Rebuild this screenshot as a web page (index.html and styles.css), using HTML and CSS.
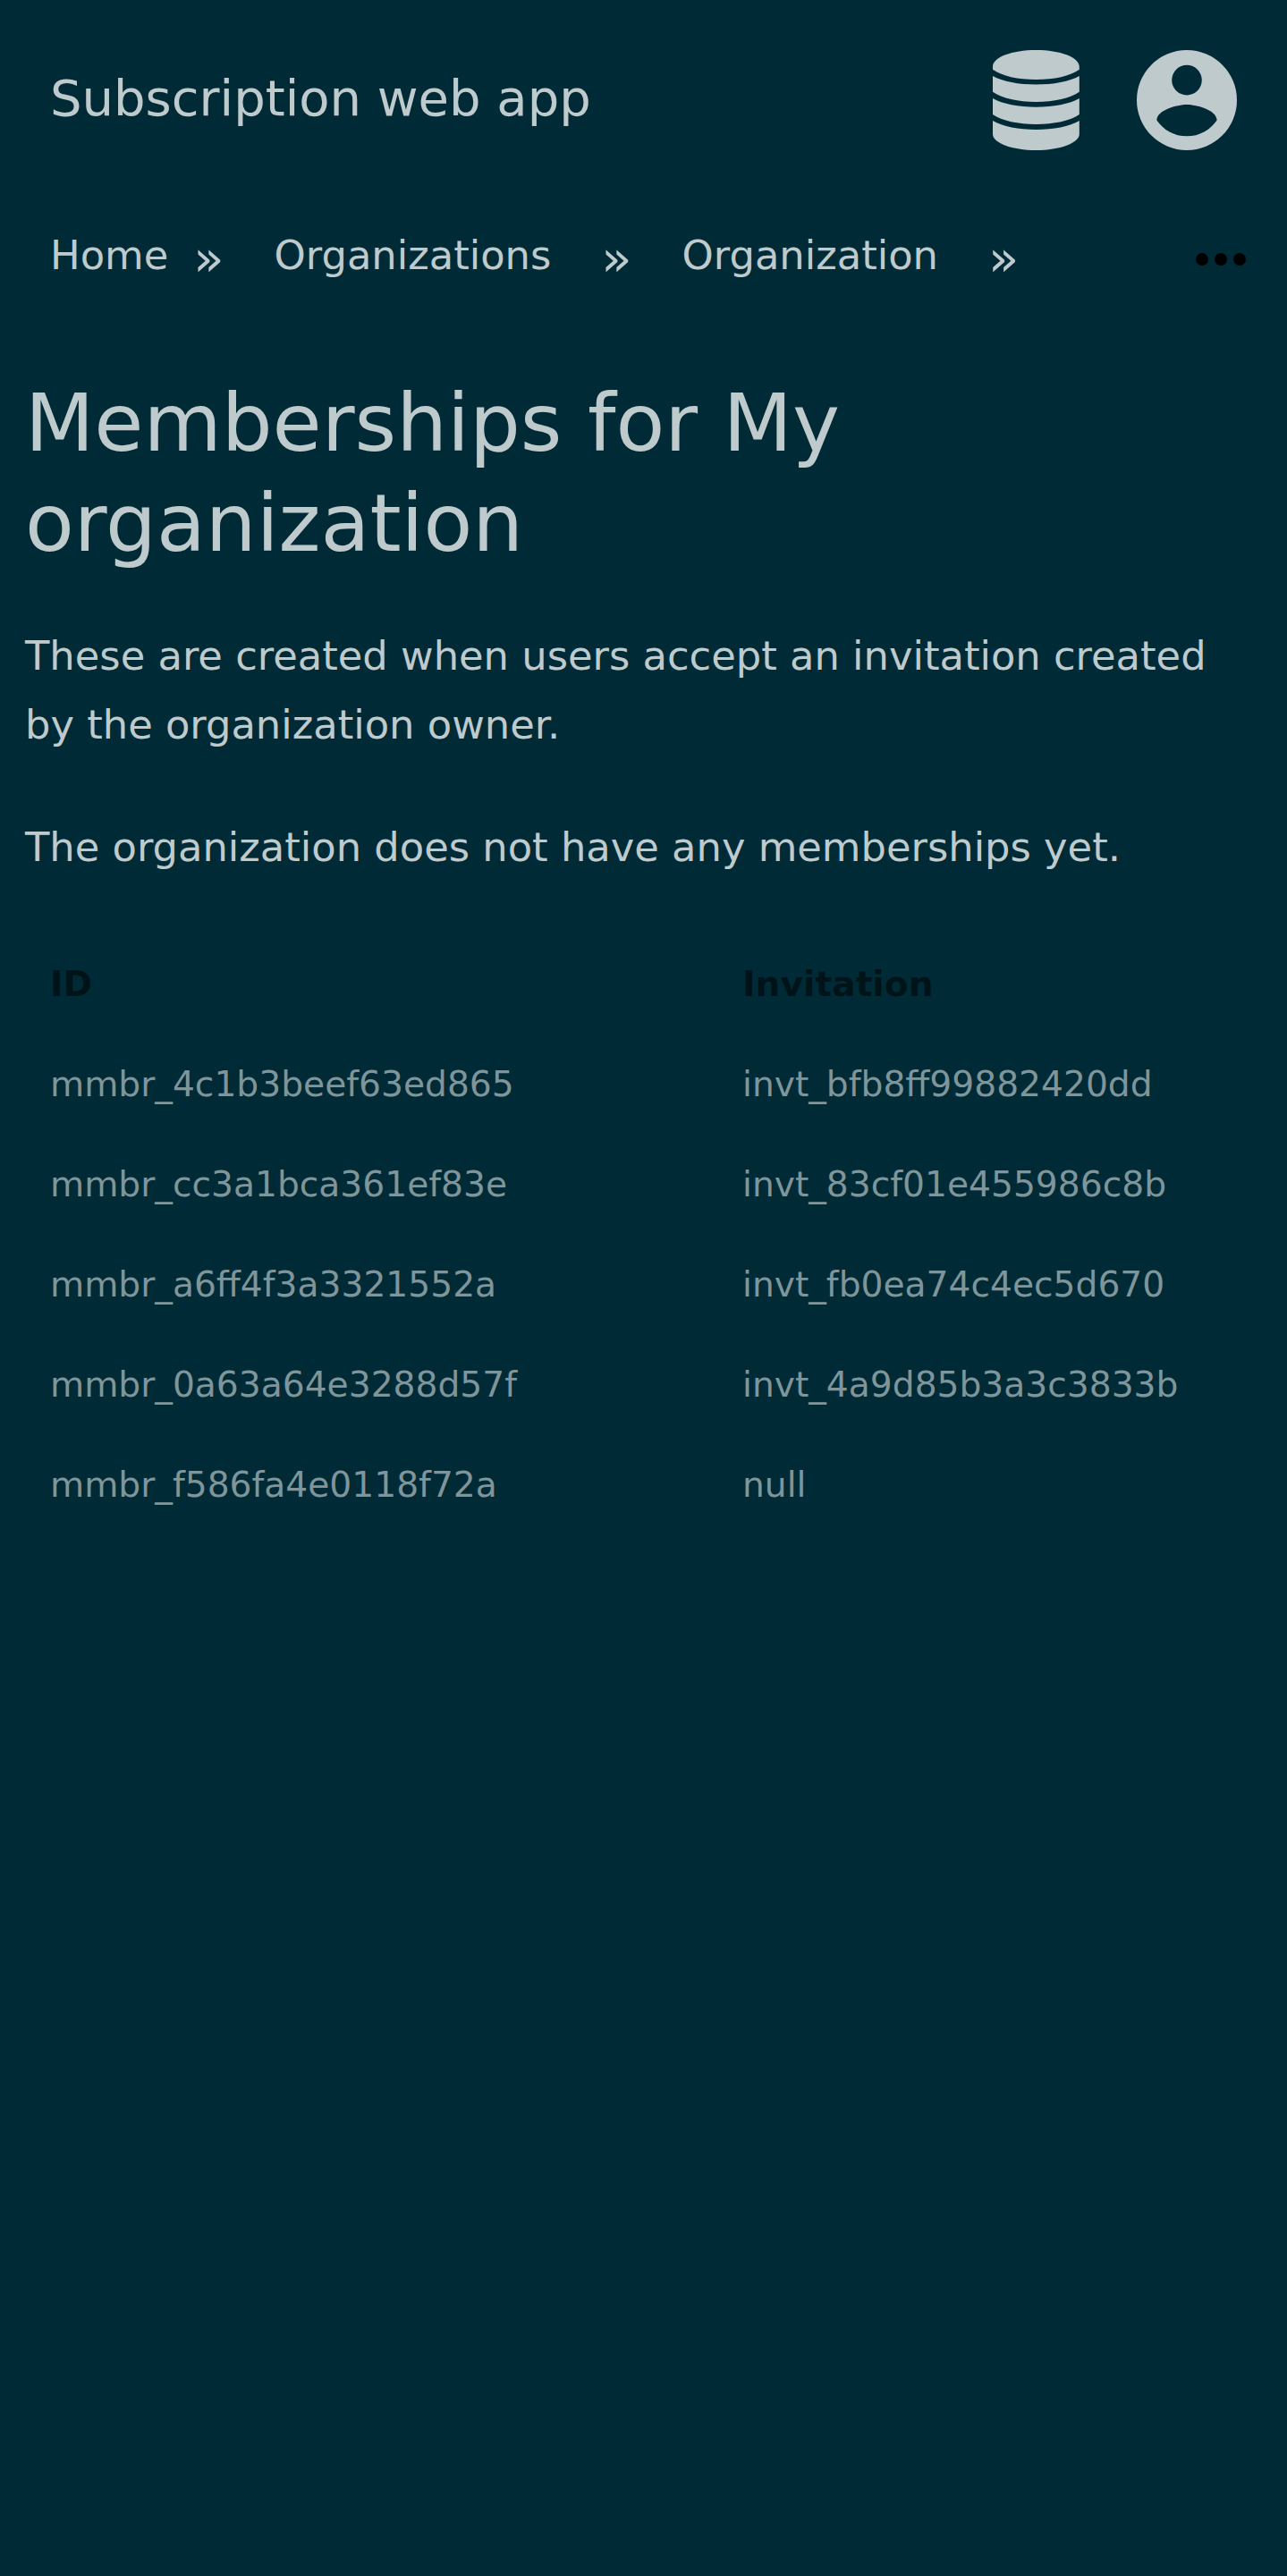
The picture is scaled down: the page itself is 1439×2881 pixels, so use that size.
FILE: index.html
```html
<!DOCTYPE html>
<html lang="en">
<head>
<meta charset="utf-8">
<title>Memberships</title>
<link rel="stylesheet" href="styles.css">
</head>
<body>
<header class="topbar">
  <a class="brand">Subscription web app</a>
  <svg class="icon database" viewBox="0 0 97 112" aria-hidden="true"><path d="M0 18.500C0 8 21.500 0 48.400 0S96.800 8 96.800 18.500V21.700C87 29 68 33 48.400 33S10 29 0 21.700zM0 29C11 35.200 29 38.500 48.400 38.500S86 35.200 96.800 29V46.800C87 54 68 57.900 48.400 57.900S10 54 0 46.800zM0 54C11 60.300 29 63.700 48.400 63.700S86 60.300 96.800 54V72C87 79 68 83 48.400 83S10 79 0 72zM0 79C11 85.500 29 89 48.400 89S86 85.500 96.800 79V94C96.800 104 75 112 48.400 112S0 104 0 94z"/></svg>
  <svg class="icon account" viewBox="2 2 20 20" aria-hidden="true"><path d="M12 19.200C9.500 19.200 7.290 17.920 6 16C6.030 14 10 12.900 12 12.900S17.970 14 18 16C16.710 17.920 14.500 19.200 12 19.200M12 5A3 3 0 0 1 15 8A3 3 0 0 1 12 11A3 3 0 0 1 9 8A3 3 0 0 1 12 5M12 2A10 10 0 0 0 2 12A10 10 0 0 0 12 22A10 10 0 0 0 22 12A10 10 0 0 0 12 2Z"/></svg>
</header>
<nav class="crumbs">
  <a class="crumb home">Home</a><span class="sep">»</span>
  <a class="crumb">Organizations</a><span class="sep">»</span>
  <a class="crumb">Organization</a><span class="sep">»</span>
  <svg class="more" viewBox="0 0 56 14" aria-hidden="true"><circle cx="7" cy="7" r="7"/><circle cx="28" cy="7" r="7"/><circle cx="49" cy="7" r="7"/></svg>
</nav>
<main class="content">
  <h1>Memberships for My organization</h1>
  <p>These are created when users accept an invitation created by the organization owner.</p>
  <p>The organization does not have any memberships yet.</p>
  <table class="list">
    <tr><th>ID</th><th>Invitation</th></tr>
    <tr><td>mmbr_4c1b3beef63ed865</td><td>invt_bfb8ff99882420dd</td></tr>
    <tr><td>mmbr_cc3a1bca361ef83e</td><td>invt_83cf01e455986c8b</td></tr>
    <tr><td>mmbr_a6ff4f3a3321552a</td><td>invt_fb0ea74c4ec5d670</td></tr>
    <tr><td>mmbr_0a63a64e3288d57f</td><td>invt_4a9d85b3a3c3833b</td></tr>
    <tr><td>mmbr_f586fa4e0118f72a</td><td>null</td></tr>
  </table>
</main>
</body>
</html>
```
FILE: styles.css
```css
body { margin: 0; background: #002b36; color: #bfcacd; font: 44.8px/77px "DejaVu Sans", sans-serif; }
.topbar { display: flex; align-items: center; height: 224px; padding: 0 56px; }
.brand { flex: 1; padding-bottom: 5px; font-size: 56px; }
.icon { height: 112px; fill: currentColor; }
.database { width: 97px; }
.account { width: 112px; margin-left: 64px; }
.crumbs { display: flex; align-items: center; height: 131px; padding: 0 46px 0 56px; }
.crumb { padding: 0 56px 8px; }
.home { padding-left: 0; padding-right: 28px; }
.sep { padding-bottom: 3px; font-size: 56px; }
.more { width: 56px; height: 14px; margin-left: auto; padding-top: 1px; }
.content { padding: 62px 28px 0; }
h1 { margin: 0 0 54px; font-size: 89.6px; font-weight: 400; line-height: 112px; }
p { margin: 0 0 60px; }
p:last-of-type { margin-bottom: 58px; }
.list { width: 100%; table-layout: fixed; border-collapse: collapse; font-size: 39.2px; }
.list th, .list td { height: 112px; padding: 0 28px; text-align: left; box-sizing: border-box; }
.list th:first-child { width: 774px; }
.list td { color: #7f959a; }
.list th { color: #001319; }
```
